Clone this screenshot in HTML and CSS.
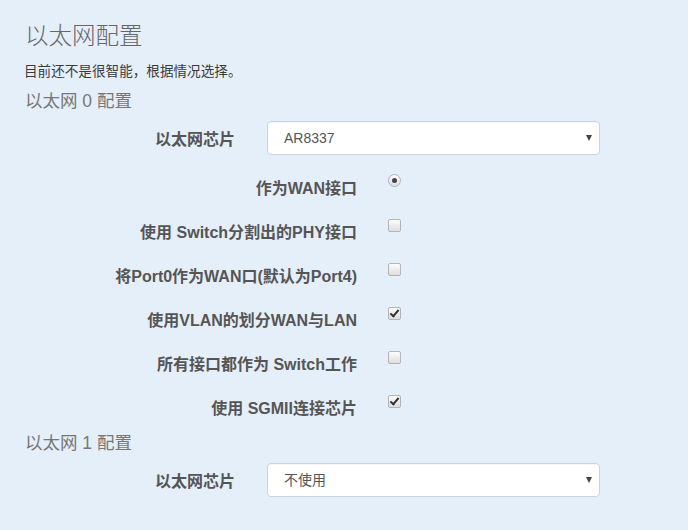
FILE: index.html
```html
<!DOCTYPE html>
<html>
<head>
    <meta charset="utf-8">
    <link rel="stylesheet" href="styles.css">
</head>
<body>
    <div id="page">
        <h2 class="title">以太网配置</h2>
        <p class="desc">目前还不是很智能，根据情况选择。</p>

        <div class="section">以太网 0 配置</div>
        <div class="select-row">
            <label class="select-label">以太网芯片</label>
            <div class="select-box">
                <select class="select">
                    <option>AR8337</option>
                </select>
                <span class="arrow"></span>
            </div>
        </div>

        <div class="check-list">
            <div class="check-row">
                <label class="check-label">作为WAN接口</label>
                <input type="radio" class="radio" checked>
            </div>
            <div class="check-row">
                <label class="check-label">使用 Switch分割出的PHY接口</label>
                <input type="checkbox" class="check">
            </div>
            <div class="check-row">
                <label class="check-label">将Port0作为WAN口(默认为Port4)</label>
                <input type="checkbox" class="check">
            </div>
            <div class="check-row">
                <label class="check-label">使用VLAN的划分WAN与LAN</label>
                <input type="checkbox" class="check" checked>
            </div>
            <div class="check-row">
                <label class="check-label">所有接口都作为 Switch工作</label>
                <input type="checkbox" class="check">
            </div>
            <div class="check-row">
                <label class="check-label">使用 SGMII连接芯片</label>
                <input type="checkbox" class="check" checked>
            </div>
        </div>

        <div class="section">以太网 1 配置</div>
        <div class="select-row">
            <label class="select-label">以太网芯片</label>
            <div class="select-box">
                <select class="select">
                    <option>不使用</option>
                </select>
                <span class="arrow"></span>
            </div>
        </div>
    </div>
</body>
</html>
```

FILE: styles.css
```css
:root {
    --page-bg: #e5eff9;
    --label-color: #555;
    --border-color: #ccd3da;
}

body {
    margin: 0;
    background: var(--page-bg);
    font-family: "Liberation Sans", "Noto Sans CJK SC", sans-serif;
    color: #333;
}

#page {
    display: flex;
    flex-direction: column;
    padding: 22px 0 0 25px;
}

.title {
    margin: 0;
    font-size: 23.5px;
    line-height: 28px;
    font-weight: 300;
    color: #666;
}

.desc {
    margin: 12px 0 0 -1px;
    font-size: 13.6px;
    line-height: 20px;
    color: #3a3a3a;
}

.section {
    margin-top: 7px;
    font-size: 17.5px;
    line-height: 24px;
    color: #777;
}

/* label + select rows */
.select-row {
    display: flex;
    align-items: center;
    gap: 32px;
    margin-top: 8px;
}

.select-label {
    width: 210px;
    text-align: right;
    font-size: 16px;
    font-weight: bold;
    color: var(--label-color);
}

.select-box {
    position: relative;
    width: 333px;
}

.select {
    appearance: none;
    display: block;
    width: 100%;
    height: 34px;
    padding: 0 16px;
    border: 1px solid var(--border-color);
    border-radius: 4px;
    background: white;
    font-family: inherit;
    font-size: 14px;
    color: #555;
    box-shadow: inset 0 1px 1px rgba(0, 0, 0, 0.04);
}

.arrow {
    position: absolute;
    right: 8px;
    top: 14px;
    border-left: 3px solid transparent;
    border-right: 3px solid transparent;
    border-top: 6px solid #444;
}

/* checkbox rows */
.check-list {
    display: flex;
    flex-direction: column;
    margin-top: 12px;
}

.check-list + .section {
    margin-top: 0;
}

.check-row {
    display: flex;
    align-items: flex-start;
    gap: 31px;
    height: 44px;
}

.check-label {
    width: 332px;
    padding-top: 12px;
    text-align: right;
    font-size: 16px;
    line-height: 20px;
    font-weight: bold;
    color: var(--label-color);
}

.check,
.radio {
    appearance: none;
    position: relative;
    width: 13px;
    height: 13px;
    margin: 8px 0 0 0;
    border: 1px solid #b4b4b4;
    background: linear-gradient(#fcfcfc, #dedede);
    box-sizing: border-box;
}

.check {
    border-radius: 2px;
}

.check:checked::after {
    content: "";
    position: absolute;
    left: 3px;
    top: 0;
    width: 3px;
    height: 7px;
    border-right: 2.5px solid #333;
    border-bottom: 2.5px solid #333;
    transform: rotate(40deg);
}

.radio {
    border-radius: 50%;
    margin-top: 7px;
}

.radio:checked::after {
    content: "";
    position: absolute;
    left: 3px;
    top: 3px;
    width: 5px;
    height: 5px;
    border-radius: 50%;
    background: #444;
}
```
